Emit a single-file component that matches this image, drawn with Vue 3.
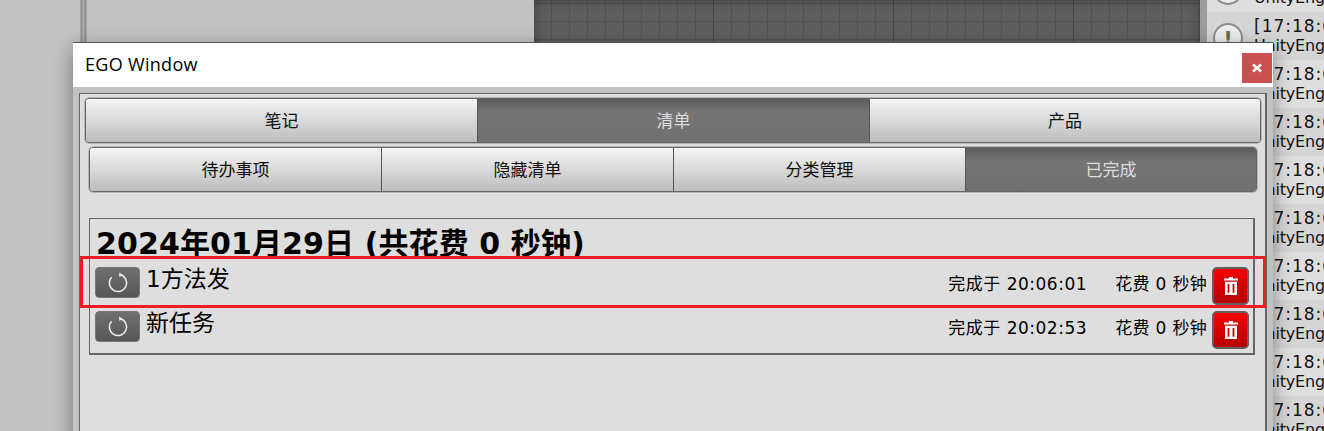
<template>
  <div class="desk">
    <div class="bg">
      <div class="bg-left"></div>
      <div class="bg-split"></div>
      <div class="bg-mid"></div>
      <div class="bg-grid"></div>
      <div class="bg-split2"></div>
      <div class="console">
        <div v-for="n in 10" :key="n" class="log" :class="{ odd: n % 2 == 0 }">
          <div class="log-icon"><span>!</span></div>
          <div class="log-text">
            <div class="log-time">[17:18:01]</div>
            <div class="log-from">UnityEngine</div>
          </div>
        </div>
      </div>
    </div>

    <div class="window">
      <div class="titlebar">
        <div class="title">EGO Window</div>
        <div class="close">
          <svg width="10" height="10" viewBox="0 0 10 10"><path d="M1 1.5 L9 8.5 M9 1.5 L1 8.5" stroke="#fff" stroke-width="2.6" /></svg>
        </div>
      </div>
      <div class="body">
        <div class="panel">
          <div class="tabs main-tabs">
            <div v-for="t in mainTabs" :key="t" class="tab" :class="{ active: t == '清单' }">{{ t }}</div>
          </div>
          <div class="tabs sub-tabs">
            <div v-for="t in subTabs" :key="t" class="tab" :class="{ active: t == '已完成' }">{{ t }}</div>
          </div>
          <div class="day-box">
            <div class="day-title">2024年01月29日 (共花费 0 秒钟)</div>
            <div class="rows">
              <div v-for="item in items" :key="item.name" class="row">
                <button class="redo">
                  <svg width="22" height="22" viewBox="0 0 22 22">
                    <path d="M13 2.6 A8.6 8.6 0 1 1 4.6 5.2" fill="none" stroke="#eee" stroke-width="1.5" />
                    <path d="M12 0.6 L15.6 2.8 L12.4 5 Z" fill="#eee" />
                  </svg>
                </button>
                <div class="name">{{ item.name }}</div>
                <div class="done">完成于 {{ item.time }}</div>
                <div class="cost">花费 0 秒钟</div>
                <button class="del">
                  <svg width="14" height="18" viewBox="0 0 14 18">
                    <path d="M5 0 H9 V1.5 H14 V3.6 H0 V1.5 H5 Z" fill="#fff" />
                    <path fill-rule="evenodd" d="M1 4.8 H13 V18 H1 Z M3.6 7 V15.8 H5.4 V7 Z M8.6 7 V15.8 H10.4 V7 Z" fill="#fff" />
                  </svg>
                </button>
              </div>
            </div>
          </div>
        </div>
      </div>
    </div>

    <div class="mark"></div>
  </div>
</template>

<script setup>
const mainTabs = ['笔记', '清单', '产品'];
const subTabs = ['待办事项', '隐藏清单', '分类管理', '已完成'];
const items = [
  { name: '1方法发', time: '20:06:01' },
  { name: '新任务', time: '20:02:53' },
];
</script>

<style>
html, body {
  margin: 0;
  background: #c2c2c2;
}
</style>

<style scoped>
.desk {
  position: relative;
  width: 1324px;
  height: 431px;
  overflow: hidden;
  font-family: "DejaVu Sans", "Noto Sans CJK SC", sans-serif;
  color: #000;
}

.bg {
  display: flex;
  height: 100%;
}

.bg-left {
  width: 80px;
  background: #c2c2c2;
}

.bg-split {
  width: 7px;
  background: linear-gradient(to right, #a8a8a8, #8e8e8e 30%, #b4b4b4 45%, #8e8e8e 70%, #a8a8a8);
}

.bg-mid {
  width: 447px;
  background: #c2c2c2;
}

.bg-grid {
  width: 666px;
  background-color: #5e5e5e;
  background-image:
    linear-gradient(to right, #484848 1px, transparent 1px),
    linear-gradient(to right, #525252 1px, transparent 1px),
    linear-gradient(to bottom, #525252 1px, transparent 1px);
  background-size: 180px 100%, 18px 100%, 100% 18px;
  background-position: 179px 0, 17px 0, 0 3px;
  box-shadow: inset 0 0 12px rgba(0, 0, 0, 0.35);
}

.bg-split2 {
  width: 7px;
  background: #9c9c9c;
}

.console {
  flex: 1;
  margin-top: -36px;
  overflow: hidden;
}

.log {
  display: flex;
  height: 48px;
  background: #dedede;
}

.log.odd {
  background: #d5d5d5;
}

.log-icon {
  flex: none;
  width: 30px;
  height: 30px;
  margin: 11px 11px 0 6px;
  border: 2px solid #8c8c8c;
  border-radius: 50%;
  background: #ececec;
  box-sizing: border-box;
  text-align: center;
  font: bold 20px/26px "DejaVu Sans", sans-serif;
  color: #666;
}

.log-text {
  line-height: 19px;
  white-space: nowrap;
  padding-top: 5px;
  color: #111;
}

.log-time {
  font-size: 17px;
  letter-spacing: 1px;
}

.log-from {
  font-size: 16px;
  letter-spacing: -0.2px;
}

.window {
  position: absolute;
  left: 73px;
  top: 42px;
  width: 1200px;
  height: 420px;
  border-top: 1px solid #555;
  box-shadow: 0 6px 18px rgba(0, 0, 0, 0.4);
  background: #c2c2c2;
}

.titlebar {
  display: flex;
  justify-content: space-between;
  height: 44px;
  background: #fff;
}

.title {
  padding: 9px 0 0 12px;
  font-family: "Open Sans", "Noto Sans", sans-serif;
  font-size: 18px;
  line-height: 25px;
  letter-spacing: 0.3px;
}

.close {
  display: flex;
  align-items: center;
  justify-content: center;
  width: 30px;
  height: 30px;
  margin: 10px 1px 0 0;
  background: #c9504f;
}

.body {
  padding: 6px 6px 0;
}

.panel {
  height: 400px;
  padding: 4px 4px 0 5px;
  border: 1px solid #666;
  border-right-width: 2px;
  background: #dedede;
}

.tabs {
  display: flex;
  box-sizing: border-box;
  height: 45px;
  border: 1px solid #666;
  border-radius: 4px;
  overflow: hidden;
  box-shadow: 0 0 0 0.5px #888;
}

.sub-tabs {
  margin: 4px 4px 0 4px;
}

.tab {
  flex: 0 0 auto;
  box-sizing: border-box;
  display: flex;
  align-items: center;
  justify-content: center;
  padding-bottom: 2px;
  border-left: 1px solid #555;
  background: linear-gradient(to bottom, #f5f5f5, #bdbdbd);
  font-size: 17px;
  color: #111;
}

.main-tabs .tab {
  width: 392px;
}

.sub-tabs .tab {
  width: 292px;
}

.main-tabs .tab:first-child {
  width: 391px;
  border-left: 0;
}

.sub-tabs .tab:first-child {
  width: 291px;
  border-left: 0;
}

.tab.active {
  background: linear-gradient(to bottom, #5c5c5c, #747474 30%, #707070);
  color: #ddd;
}

.tab:last-child {
  flex: 1;
}

.day-box {
  box-sizing: border-box;
  height: 137px;
  margin: 26px 6px 0 4px;
  padding: 0 4px;
  border: 1px solid #666;
  border-width: 1px 2px 2px 1px;
}

.day-title {
  height: 48px;
  padding-left: 2px;
  font-size: 30px;
  font-weight: bold;
  line-height: 50px;
  letter-spacing: 0.1px;
  white-space: nowrap;
}

.rows {
  display: flex;
  flex-direction: column;
  gap: 6px;
}

.row {
  display: flex;
  height: 38px;
  align-items: flex-start;
}

.redo {
  flex: none;
  display: flex;
  align-items: center;
  justify-content: center;
  width: 45px;
  height: 31px;
  margin: 0 6px 0 1px;
  padding: 0;
  border: 1px solid #777;
  border-radius: 4px;
  background: linear-gradient(to bottom, #707070, #565656);
}

.name {
  flex: 1;
  font-size: 23px;
  line-height: 24px;
}

.done {
  width: 167px;
  padding-top: 6px;
  font-size: 17px;
  line-height: 22px;
  letter-spacing: 0.5px;
  white-space: nowrap;
}

.cost {
  padding-top: 6px;
  margin-right: 5px;
  font-size: 17px;
  line-height: 22px;
  letter-spacing: 0.3px;
  white-space: nowrap;
}

.del {
  flex: none;
  display: flex;
  align-items: center;
  justify-content: center;
  width: 37px;
  height: 38px;
  padding: 0;
  border: 2px solid #5f5f5f;
  border-radius: 5px;
  background: linear-gradient(to bottom, #f80000, #b40000);
}

.mark {
  position: absolute;
  left: 80px;
  top: 256px;
  width: 1180px;
  height: 46px;
  border: 3px solid #ee1c25;
}
</style>
